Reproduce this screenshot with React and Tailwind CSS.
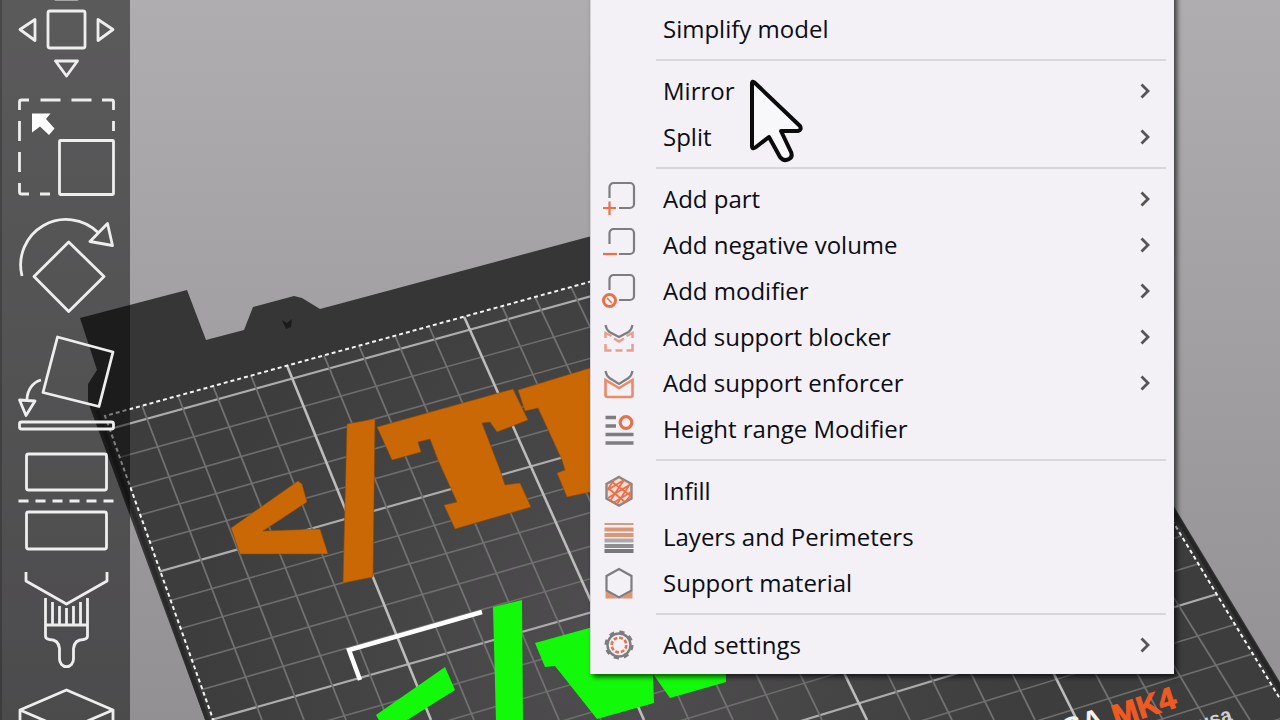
import { Fragment } from 'react'

// Heights of the bed's cross lines at x=200 and at x=1175, every fifth is a major line
const crossLines = [
  [404, 135], [435, 165], [468, 194], [498, 223], [528, 253],
  [560, 284], [592, 315], [623, 347], [658, 379], [690, 412],
  [723, 447], [757, 478], [793, 508], [829, 538], [866, 571],
  [904, 607], [942, 643], [981, 678], [1020, 715], [1060, 752],
]

// x at the far edge of the bed and x at y=720
const depthLines = [
  [142, 262], [178, 304], [213, 346], [251, 388], [287, 431],
  [324, 474], [359, 516], [395, 559], [429, 601], [464, 644],
  [502, 689], [535, 733], [571, 778], [609, 822], [646, 867],
  [683, 910], [719, 952], [755, 994], [791, 1035], [825, 1077],
  [850, 1120], [875, 1163], [897, 1206], [920, 1250],
]

function farEdge(x) {
  return 416 - (x - 105) * 0.277
}

function Scene() {
  return (
    <svg
      className="absolute inset-0 h-full w-full"
      viewBox="0 0 1280 720"
      preserveAspectRatio="xMidYMid slice"
      role="img"
      aria-label="Print bed"
    >
      <defs>
        <linearGradient id="sky" x1="0" y1="0" x2="0" y2="1">
          <stop offset="0" stopColor="#afadaf" />
          <stop offset="1" stopColor="#929093" />
        </linearGradient>
        <radialGradient id="bed" gradientUnits="userSpaceOnUse" cx="620" cy="640" r="420">
          <stop offset="0" stopColor="#504e50" />
          <stop offset="1" stopColor="#3d3d3d" />
        </radialGradient>
        <clipPath id="bedClip">
          <path d="M105 416L965 178 1290 715V730H215Z" />
        </clipPath>
      </defs>
      <rect width="1280" height="720" fill="url(#sky)" />
      <path
        d="M80 318L187 290 206 340 244 330 253 307 294 296 302 298 320 309 588 237 970 168 1304 722H206L88 402V384L97 370Z"
        fill="#363636"
      />
      <path d="M282 320l5 3 5-4-1 8-5 2Z" fill="#1c1c1c" />
      <path d="M105 416L965 178 1290 715V730H215Z" fill="url(#bed)" />
      <path d="M97 410L208 722" stroke="#2a2a2a" strokeWidth="4" />
      <path d="M1174 512L1300 722" stroke="#262626" strokeWidth="4" />
      <g clipPath="url(#bedClip)" fill="none">
        {crossLines.map(([y1, y2], i) => (
          <line
            key={y1}
            x1="100"
            x2="1285"
            y1={y1 - (y2 - y1) * 0.103}
            y2={y2 + (y2 - y1) * 0.113}
            stroke={i % 5 === 0 ? '#acacac' : '#6e6d6e'}
            strokeWidth={i % 5 === 0 ? 2.2 : 1.6}
          />
        ))}
        {depthLines.map(([x1, x2], i) => (
          <line
            key={x1}
            x1={x1}
            y1={farEdge(x1)}
            x2={x2}
            y2="720"
            stroke={i % 5 === 4 ? '#bcbcbc' : '#727172'}
            strokeWidth={i % 5 === 4 ? 2.6 : 1.8}
          />
        ))}
      </g>
      <path
        d="M214 722L105 416 965 178 1294 722"
        fill="none"
        stroke="#f4f4f4"
        strokeWidth="2"
        strokeDasharray="4 3"
      />

      <g fill="#cb6806" stroke="#8f4a04" strokeWidth="0.6">
        <path d="M298 481L302 484 307 502 263 531 320 529 328 554 240 554 231 528Z" />
        <path d="M347 424L375 419 373 577 343 583Z" />
        <path d="M377 427L513 389 528 420 497 432 490 422 482 423 500 470 505 485 520 483 531 507 455 529 444 505 457 502 438 460 430 439 418 442 421 452 392 460Z" />
        <path d="M518 390L600 365V490L567 497 557 473 565 470 562 460 538 408 525 411Z" />
      </g>
      <g fill="#12fa0a">
        <path d="M445 667L455 690 404 722H380L376 715Z" />
        <path d="M493 607L522 600 523 722H496Z" />
        <path d="M535 643L600 625 700 660 726 670V682L670 698 653 674 654 703 597 719 555 666 545 667Z" />
      </g>
      <path d="M482 612L349 650 360 680" fill="none" stroke="#ffffff" strokeWidth="4.5" />

      <g className="font-['Liberation_Sans',sans-serif] font-bold">
        <text transform="translate(1106 727) rotate(-18)" textAnchor="end" fontSize="30" fill="#f2f2f2">
          PRUSA
        </text>
        <text transform="translate(1116 727) rotate(-18)" fontSize="31" fill="#ee5a22" stroke="#ee5a22">
          MK4
        </text>
        <text transform="translate(1233 720) rotate(-18)" textAnchor="end" fontSize="20" fill="#d0d0d0">
          by Josef Prusa
        </text>
      </g>
    </svg>
  )
}

const tools = [
  {
    label: 'Move',
    art: (
      <>
        <rect x="48" y="41" width="37" height="37" rx="2" />
        <path d="M20 59.500L35 49.500V70.500ZM113 59.500L98 49.500V70.500ZM55.500 91H77.500L66.500 106ZM55.500 29H77.500L66.500 14Z" />
      </>
    ),
  },
  {
    label: 'Scale',
    art: (
      <>
        <path d="M19.500 22V14a2 2 0 0 1 2-2H29M40.500 12h20M71.500 12h20M102 12h9.500a2 2 0 0 1 2 2V22M113.500 33v10M19.500 33v20M19.500 64v20M19.500 95v9a2 2 0 0 0 2 2H29M40 106h10" />
        <path d="M32 25.500H50.500L46 31 54.500 40.500 49 47 40 38.500 32 44.500Z" fill="#fff" stroke="none" />
        <rect x="59.500" y="52.500" width="54" height="54" rx="1" />
      </>
    ),
  },
  {
    label: 'Rotate',
    art: (
      <path d="M22 70A45.500 45.500 0 0 1 98 26.500M107.500 17.500L90 35.500 112.500 39.500ZM68.700 36L104 70.500 68.700 105.500 34 70.500Z" />
    ),
  },
  {
    label: 'Place on face',
    art: (
      <>
        <path d="M57.500 13L113 28 99 82.500 43 68.500ZM41 56C33 58 27 66 27 76M19.500 76L35 77 26 91.500Z" />
        <rect x="19.500" y="98" width="94" height="7" rx="2" />
      </>
    ),
  },
  {
    label: 'Cut',
    art: (
      <>
        <rect x="26.500" y="12" width="80" height="36" rx="2" />
        <path d="M18.500 59H115" strokeDasharray="10 7" />
        <rect x="26.500" y="70" width="80" height="37" rx="2" />
      </>
    ),
  },
  {
    label: 'Paint-on supports',
    art: (
      <>
        <path d="M26 12V21L66.500 44 107 21V12" />
        <path d="M45.500 38V76q0 3 4 3.500q9 0 10 9V99a6.800 7.500 0 0 0 14 0V88.500q1-9 10-9q4-.5 4-3.500V38M45.500 65H87.500M52.500 42V65M59.500 46V65M66.500 48V65M73.500 46V65M80.500 42V65" />
      </>
    ),
  },
  {
    label: 'Seam painting',
    art: <path d="M66.500 12L113 32 66.500 52 20 32ZM20 32V84L66.500 105 113 84V32M66.500 52V105" />,
  },
]

function Toolbar() {
  return (
    <nav className="relative w-[130px] shrink-0 overflow-hidden border-l-2 border-black/20 bg-black/48">
      <div className="-mt-[30px] -ml-0.5 flex flex-col">
        {tools.map((tool) => (
          <button key={tool.label} aria-label={tool.label} className="block w-[130px] shrink-0">
            <svg
              className="block w-full"
              viewBox="0 0 130 118"
              fill="none"
              stroke="#eeeeee"
              strokeWidth="2.800"
              strokeLinejoin="round"
            >
              {tool.art}
            </svg>
          </button>
        ))}
      </div>
    </nav>
  )
}

const gray = '#7d7d80'
const orange = '#e8704a'

function CornerBox() {
  return <path d="M6.500 15V4a4 4 0 0 1 4-4H27a4 4 0 0 1 4 4V21a4 4 0 0 1-4 4H16" stroke={gray} />
}

const icons = {
  part: (
    <>
      <CornerBox />
      <path d="M0 25H13M6.500 18.500V32" stroke={orange} />
    </>
  ),
  negative: (
    <>
      <CornerBox />
      <path d="M0 25H14" stroke={orange} />
    </>
  ),
  modifier: (
    <>
      <CornerBox />
      <circle cx="6.500" cy="25.500" r="6" stroke={orange} strokeWidth="3" />
      <path d="M4 23L9 28" stroke={orange} strokeWidth="1.500" />
    </>
  ),
  blocker: (
    <>
      <path d="M2.500 4q1 5 4 7L16 16l9.500-5q3-2 4-7" stroke={gray} />
      <path d="M2.500 17V12l6 3M11 17.500l5 3 5-3M23.500 15l6-3v5M2.500 23v6.500h6M12.500 29.500h7M23.500 29.500h6V23" stroke="#eb9c90" strokeWidth="2.500" />
    </>
  ),
  enforcer: (
    <>
      <path d="M2.500 4q1 5 4 7L16 17l9.500-6q3-2 4-7" stroke={gray} />
      <path d="M2.500 13V28a2 2 0 0 0 2 2H27.500a2 2 0 0 0 2-2V13L16 21Z" stroke="#ec8a68" strokeWidth="2.600" />
    </>
  ),
  range: (
    <>
      <path d="M2.500 4.500h10.500M2.500 13h10.500M2.500 21.500h28M2.500 30h28" stroke={gray} strokeWidth="3.500" />
      <circle cx="23" cy="9.500" r="5.800" stroke={orange} strokeWidth="3.200" />
    </>
  ),
  infill: (
    <>
      <path d="M16 2L28.500 9V23.500L16 30.500 3.500 23.500V9Z" fill="#f6ddd4" stroke="#8d8583" strokeWidth="2.400" />
      <path d="M4.500 15L21 5M5 23L28 9M10 28L28 17M11 5L5 14M21 5L7 26M27 9L14 29M28 20L22 27M5 13L22 27M9 7L28 21" stroke={orange} strokeWidth="1.800" />
    </>
  ),
  layers: (
    <>
      <path d="M1.500 3H30.500" stroke="#cf9c88" strokeWidth="2" />
      <path d="M1.500 8.500H30.500M1.500 14H30.500" stroke="#dd9574" strokeWidth="4" />
      <path d="M1.500 19.500H30.500" stroke="#a9a9ab" strokeWidth="4" />
      <path d="M1.500 25H30.500" stroke="#8d8d90" strokeWidth="4" />
      <path d="M1.500 30H30.500" stroke="#77777a" strokeWidth="4" />
    </>
  ),
  support: (
    <>
      <path d="M2.500 24L15 31.500H2.500ZM29.500 24L17 31.500H29.500Z" fill="#e2946f" />
      <path d="M16 2L28.500 9V23.500L16 30.500 3.500 23.500V9Z" fill="#f3f1f5" stroke={gray} />
    </>
  ),
  settings: (
    <>
      <circle cx="16" cy="16" r="13.200" stroke={gray} strokeWidth="2.600" strokeDasharray="5.180 5.180" />
      <circle cx="16" cy="16" r="11.500" stroke={gray} strokeWidth="2.400" />
      <circle cx="16" cy="16" r="7.300" stroke={orange} strokeWidth="2.600" strokeDasharray="3.800 1.930" />
    </>
  ),
}

const groups = [
  [{ label: 'Fix by Windows repair algorithm' }, { label: 'Simplify model' }],
  [
    { label: 'Mirror', submenu: true },
    { label: 'Split', submenu: true },
  ],
  [
    { label: 'Add part', icon: 'part', submenu: true },
    { label: 'Add negative volume', icon: 'negative', submenu: true },
    { label: 'Add modifier', icon: 'modifier', submenu: true },
    { label: 'Add support blocker', icon: 'blocker', submenu: true },
    { label: 'Add support enforcer', icon: 'enforcer', submenu: true },
    { label: 'Height range Modifier', icon: 'range' },
  ],
  [
    { label: 'Infill', icon: 'infill' },
    { label: 'Layers and Perimeters', icon: 'layers' },
    { label: 'Support material', icon: 'support' },
  ],
  [{ label: 'Add settings', icon: 'settings', submenu: true }],
]

function MenuItem({ label, icon, submenu }) {
  return (
    <button role="menuitem" className="flex h-[46px] w-full items-center gap-7 pr-6 pl-3 text-left">
      <svg className="size-8 shrink-0 overflow-visible" viewBox="0 0 32 32" fill="none" strokeWidth="2.200">
        {icon ? icons[icon] : null}
      </svg>
      <span className="flex-1 whitespace-nowrap">{label}</span>
      {submenu ? (
        <svg className="h-4 w-2.5 shrink-0" viewBox="0 0 10 16" fill="none" stroke="#555" strokeWidth="2.800">
          <path d="M1.500 1.500L8 8 1.500 14.500" />
        </svg>
      ) : null}
    </button>
  )
}

function ContextMenu() {
  return (
    <div
      role="menu"
      className="absolute -top-10 left-[590px] w-[584px] border-l border-[#d4d2d6] bg-[#f3f1f5] pb-1.5 font-['Open_Sans','Noto_Sans',sans-serif] text-[24px] leading-8 text-[#0c0c14] shadow-[3px_3px_5px_rgba(0,0,0,0.65)]"
    >
      {groups.map((items, i) => (
        <Fragment key={items[0].label}>
          {i > 0 ? (
            <div role="separator" className="mr-2 ml-[65px] flex h-4 items-center">
              <div className="h-0.5 w-full bg-[#d8d6da]" />
            </div>
          ) : null}
          {items.map((item) => (
            <MenuItem key={item.label} {...item} />
          ))}
        </Fragment>
      ))}
    </div>
  )
}

function Pointer() {
  return (
    <svg
      className="pointer-events-none absolute top-[78px] left-[747px] h-[88px] w-[58px]"
      viewBox="0 0 58 88"
      fill="#f8f7fa"
      stroke="#0b0b0b"
      strokeWidth="4"
      strokeLinejoin="round"
    >
      <path d="M5 6q0-4 3-1L53 48q2 4-2 5H34L44 74q2 5-2 7q-5 3-9-2L22 59 9 69q-4 3-4-1Z" />
    </svg>
  )
}

export default function App() {
  return (
    <div className="relative flex h-screen overflow-hidden">
      <Scene />
      <Toolbar />
      <ContextMenu />
      <Pointer />
    </div>
  )
}
